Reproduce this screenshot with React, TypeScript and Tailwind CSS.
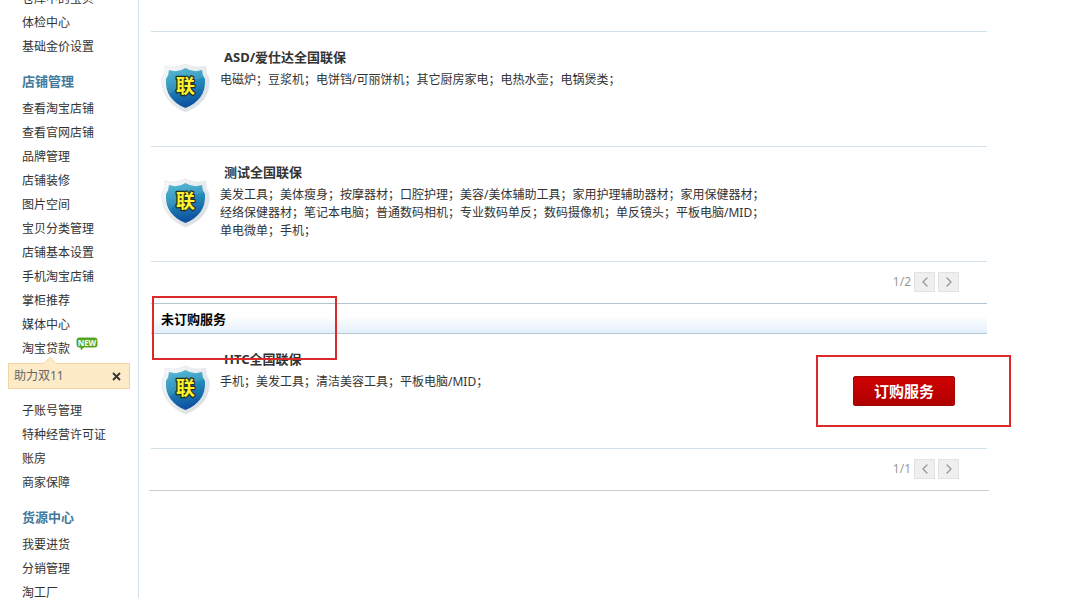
import { ChevronLeft, ChevronRight } from "lucide-react";

const menuGroups = [
  { title: "", items: ["仓库中的宝贝", "体检中心", "基础金价设置"] },
  {
    title: "店铺管理",
    items: [
      "查看淘宝店铺",
      "查看官网店铺",
      "品牌管理",
      "店铺装修",
      "图片空间",
      "宝贝分类管理",
      "店铺基本设置",
      "手机淘宝店铺",
      "掌柜推荐",
      "媒体中心",
      "淘宝贷款",
      "子账号管理",
      "特种经营许可证",
      "账房",
      "商家保障",
    ],
  },
  { title: "货源中心", items: ["我要进货", "分销管理", "淘工厂"] },
];

const ordered = [
  {
    title: "ASD/爱仕达全国联保",
    description: "电磁炉；豆浆机；电饼铛/可丽饼机；其它厨房家电；电热水壶；电锅煲类；",
  },
  {
    title: "测试全国联保",
    description:
      "美发工具；美体瘦身；按摩器材；口腔护理；美容/美体辅助工具；家用护理辅助器材；家用保健器材；经络保健器材；笔记本电脑；普通数码相机；专业数码单反；数码摄像机；单反镜头；平板电脑/MID；单电微单；手机；",
  },
];

const Shield = () => (
  <svg viewBox="0 0 50 50" className="w-[50px] h-[50px] shrink-0" aria-hidden="true">
    <defs>
      <linearGradient id="shield-blue" x1="0" y1="0" x2="0.2" y2="1">
        <stop offset="0" stopColor="#45b4d0" />
        <stop offset="0.5" stopColor="#2088b8" />
        <stop offset="1" stopColor="#0f52a0" />
      </linearGradient>
      <linearGradient id="shield-rim" x1="0" y1="0" x2="1" y2="1">
        <stop offset="0" stopColor="#f8fafb" />
        <stop offset="1" stopColor="#d4dade" />
      </linearGradient>
    </defs>
    <path
      d="M4 3 Q15 6 24.5 1 Q34 6 45 3 Q44 10 48 15 C50 32 40 43 24.5 49 C10 43 0 32 1 15 Q5 10 4 3Z"
      fill="url(#shield-rim)"
      stroke="#e3e7ea"
      strokeWidth="0.8"
    />
    <path
      d="M8 7 Q17 10 24.5 5 Q32 10 41 7 Q41 12 44 16 C45 31 37 40 24.5 45 C12 40 4 31 5 16 Q8 12 8 7Z"
      fill="url(#shield-blue)"
    />
    <path d="M8 7 Q17 10 24.5 5 Q32 10 41 7 Q41 11 43 14 Q22 20 9 31 Q4 23 5 16 Q8 12 8 7Z" fill="#fff" opacity="0.1" />
    <text
      x="24.5"
      y="29.5"
      textAnchor="middle"
      fontSize="19"
      fontWeight="700"
      fill="#fff22e"
      stroke="#20301c"
      strokeWidth="2.5"
      strokeLinejoin="round"
      paintOrder="stroke"
    >
      联
    </text>
  </svg>
);

const NewBadge = () => (
  <svg viewBox="0 0 22 13" className="absolute left-full top-px ml-1.5 w-[22px] h-[13px]" aria-label="NEW">
    <path d="M3 1 H19 Q21 1 21 3 V8 Q21 10 19 10 H8 L5 12.5 V10 H3 Q1 10 1 8 V3 Q1 1 3 1Z" fill="#55ab1c" stroke="#459313" strokeWidth="0.8" />
    <text x="11" y="8.5" textAnchor="middle" fontSize="8" fontWeight="700" fill="#fff">
      NEW
    </text>
  </svg>
);

const Notice = () => (
  <div className="relative mt-[3px] mb-[9px] mx-2 h-[26px] flex items-center justify-between border border-[#f3d3a0] bg-[#fdeac6] pl-[5px] pr-2 text-[#666]">
    <svg viewBox="0 0 14 7" className="absolute left-[34px] -top-[7px] w-[14px] h-[7px]" aria-hidden="true">
      <path d="M0 7 L7 0 L14 7Z" fill="#fdeac6" />
      <path d="M0 6.5 L7 0.5 L14 6.5" fill="none" stroke="#f6dfb6" />
    </svg>
    <span className="leading-[26px]">助力双11</span>
    <button type="button" aria-label="关闭" className="text-[#333]">
      <svg viewBox="0 0 9 9" className="w-[9px] h-[9px]">
        <path d="M1 1 L8 8 M8 1 L1 8" stroke="currentColor" strokeWidth="1.8" />
      </svg>
    </button>
  </div>
);

const Sidebar = () => (
  <nav className="w-[139px] shrink-0 border-r border-[#d3e1ee]">
    <div className="-mt-[14px]">
      {menuGroups.map((group) => (
        <div key={group.title}>
          {group.title && (
            <h2 className="pt-3 pb-1 pl-[22px] text-[13px] leading-[22px] font-bold text-[#44799c]">{group.title}</h2>
          )}
          <ul>
            {group.items.map((item) => (
              <li key={item}>
                <a href="#" className="relative ml-[22px] inline-block h-6 align-top leading-[26px]">
                  {item}
                  {item === "淘宝贷款" && <NewBadge />}
                </a>
                {item === "淘宝贷款" && <Notice />}
              </li>
            ))}
          </ul>
        </div>
      ))}
    </div>
  </nav>
);

type ServiceProps = { title: string; description: string; canOrder?: boolean };

const Service = ({ title, description, canOrder }: ServiceProps) => (
  <article className="flex h-[115px] border-b border-[#d0e3ec] pl-[10px] pr-8">
    <div className="pt-[31px]">
      <Shield />
    </div>
    <div className="ml-[9px] flex-1 pt-[15px]">
      <h3 className="ml-1 text-[13px] leading-5 font-bold">{title}</h3>
      <p className="mt-1 max-w-[550px] leading-[18px]">{description}</p>
    </div>
    {canOrder && (
      <button
        type="button"
        className="mt-[42px] h-[30px] w-[102px] rounded-xs border border-[#a00808] bg-linear-to-b from-[#d00202] to-[#b00000] text-[15px] font-bold text-white"
      >
        订购服务
      </button>
    )}
  </article>
);

const Pager = ({ total }: { total: number }) => (
  <div className="flex h-[41px] items-center justify-end gap-[3px] pr-7 pb-px text-[#999]">
    <span>1/{total}</span>
    <button type="button" aria-label="上一页" className="flex h-5 w-[21px] items-center justify-center border border-[#e2e2e2] bg-[#efefef]">
      <ChevronLeft className="w-4 h-4" strokeWidth={2} />
    </button>
    <button type="button" aria-label="下一页" className="flex h-5 w-[21px] items-center justify-center border border-[#e2e2e2] bg-[#efefef]">
      <ChevronRight className="w-4 h-4" strokeWidth={2} />
    </button>
  </div>
);

export default function App() {
  return (
    <div className="flex h-screen overflow-hidden bg-white font-['Noto_Sans','Noto_Sans_CJK_SC',sans-serif] text-xs text-[#333]">
      <Sidebar />
      <main className="ml-[10px] mr-[102px] flex-1">
        <div className="border-b border-[#c8cfd6] px-0.5">
          <div className="h-8 border-b border-[#d0e3ec]" />
          {ordered.map((service) => (
            <Service key={service.title} {...service} />
          ))}
          <Pager total={2} />
          <div className="relative">
            <h2 className="h-[31px] border-y border-[#b0c6d1] bg-linear-to-b from-white from-40% to-[#e5effa] pl-[10px] text-[13px] leading-[30px] font-bold text-black">
              未订购服务
            </h2>
            <div className="pointer-events-none absolute left-px -top-[7px] z-10 h-16 w-[185px] border-2 border-[#dc2a2a]" />
          </div>
          <div className="relative">
            <Service title="HTC全国联保" description="手机；美发工具；清洁美容工具；平板电脑/MID；" canOrder />
            <div className="pointer-events-none absolute -right-6 top-[21px] h-[72px] w-[195px] border-2 border-[#dc2a2a]" />
          </div>
          <Pager total={1} />
        </div>
      </main>
    </div>
  );
}
